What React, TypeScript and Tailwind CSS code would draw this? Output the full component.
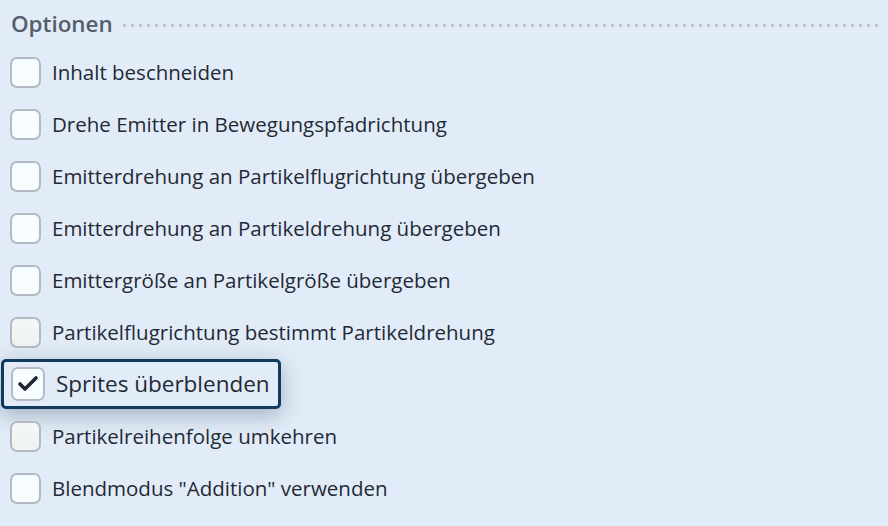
import { Check } from "lucide-react";

const OPTIONS = [
  { label: "Inhalt beschneiden", soft: false },
  { label: "Drehe Emitter in Bewegungspfadrichtung", soft: false },
  { label: "Emitterdrehung an Partikelflugrichtung übergeben", soft: false },
  { label: "Emitterdrehung an Partikeldrehung übergeben", soft: false },
  { label: "Emittergröße an Partikelgröße übergeben", soft: false },
  { label: "Partikelflugrichtung bestimmt Partikeldrehung", soft: true },
  { label: "Sprites überblenden", checked: true, soft: false },
  { label: "Partikelreihenfolge umkehren", soft: true },
  { label: 'Blendmodus "Addition" verwenden', soft: false },
];

function Box({ checked, soft }: { checked?: boolean; soft?: boolean }) {
  return (
    <span
      className={`flex shrink-0 items-center justify-center rounded-[7px] border-2 border-[#b3bac4] ${
        checked ? "h-[34px] w-[34px]" : "h-[31px] w-[31px]"
      } ${soft ? "bg-gradient-to-b from-[#f3f6f6] to-[#eef4f1]" : "bg-[#f7fdff]"}`}
    >
      {checked ? <Check className="h-6 w-6 text-[#1f2630]" strokeWidth={3.6} /> : null}
    </span>
  );
}

export default function App() {
  return (
    <div
      className="h-[526px] w-[888px] overflow-hidden bg-[#e2ecf8] text-[#232a35]"
      style={{ fontFamily: '"Open Sans", "Noto Sans", sans-serif' }}
    >
      <div className="flex items-center gap-[10px] pl-[11px] pr-[10px] pt-[9px]">
        <h2 className="text-[22.4px] font-semibold leading-[30px] text-[#545d69]">Optionen</h2>
        <div className="mt-[2px] h-[3px] flex-1 [background-image:linear-gradient(90deg,#bcc3cc_3px,transparent_3px)] bg-[length:8px_3px]" />
      </div>
      <div className="mt-[7px] flex flex-col">
        {OPTIONS.map((o) =>
          o.checked ? (
            <div key={o.label} className="flex h-[52px] items-center pl-[1px]">
              <div className="inline-flex h-[50px] items-center gap-[11px] rounded-[5px] border-[3px] border-[#0f3b60] bg-[#e2ecf8] pl-[7px] pr-[8px] shadow-[0_6px_22px_rgba(40,60,90,0.35)]">
                <Box checked />
                <span className="text-[22.5px] leading-none">{o.label}</span>
              </div>
            </div>
          ) : (
            <div key={o.label} className="flex h-[52px] items-center gap-[11px] pl-[10px]">
              <Box soft={o.soft} />
              <span className="text-[20.5px] leading-none">{o.label}</span>
            </div>
          ),
        )}
      </div>
    </div>
  );
}
